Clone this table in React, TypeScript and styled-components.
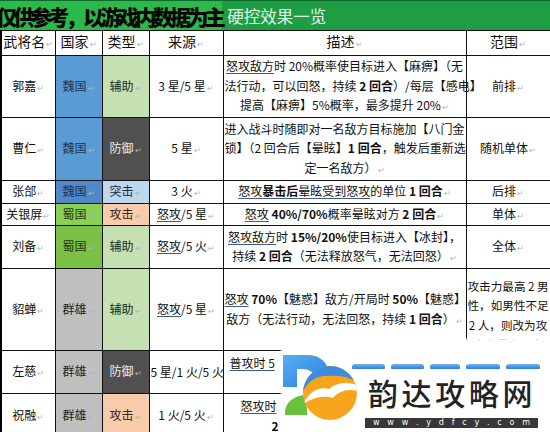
import React from 'react';
import styled, { createGlobalStyle } from 'styled-components';

const GlobalStyle = createGlobalStyle`
  html, body {
    margin: 0;
    padding: 0;
    background: #fff;
  }
  body {
    font-family: "Noto Sans CJK SC", "Noto Sans", sans-serif;
  }
`;

const Page = styled.div`
  position: relative;
  width: 550px;
  height: 432px;
  overflow: hidden;
  background: #fff;
  color: #111;
`;

const Banner = styled.div`
  display: flex;
  align-items: center;
  height: 30px;
  box-sizing: border-box;
  background: #1f9d44;
  border-top: 1px solid #0e6a2a;
  overflow: hidden;
`;

const Notice = styled.span`
  flex: 0 0 226px;
  align-self: stretch;
  display: flex;
  align-items: center;
  margin-left: -4px;
  background: #2cb94b;
  color: #050505;
  font-size: 21px;
  font-weight: 900;
  letter-spacing: -3.6px;
  white-space: nowrap;
`;

const Title = styled.span`
  margin-left: 5px;
  color: #e2f6e4;
  font-size: 16.5px;
  white-space: nowrap;
`;

const Sheet = styled.table`
  width: 549px;
  border-collapse: collapse;
  table-layout: fixed;
  border-left: 2px solid #000;
  font-size: 12px;
  line-height: 19.5px;
`;

const Th = styled.th`
  height: 24px;
  padding: 0;
  border: 1px solid #111;
  font-size: 14px;
  font-weight: 400;
  text-align: center;
  white-space: nowrap;
`;

const Row = styled.tr<{ $h: number }>`
  height: ${p => p.$h}px;
`;

const Td = styled.td<{ $bg?: string; $fg?: string; $small?: boolean }>`
  padding: 0 1px;
  border: 1px solid #111;
  background: ${p => p.$bg ?? 'transparent'};
  color: ${p => p.$fg ?? '#111'};
  font-size: ${p => (p.$small ? '11.6px' : 'inherit')};
  text-align: center;
  vertical-align: middle;
  white-space: nowrap;
  overflow: visible;
`;

const Lines = styled.div<{ $shift?: number }>`
  margin-top: ${p => p.$shift ?? 0}px;
  margin-bottom: ${p => -(p.$shift ?? 0)}px;
`;

const Line = styled.div<{ $indent?: number }>`
  min-height: 19.5px;
  text-align: ${p => (p.$indent === undefined ? 'center' : 'left')};
  padding-left: ${p => p.$indent ?? 0}px;
`;

const Mark = styled.span`
  margin-left: 1px;
  color: #b4b4b4;
  font-size: 8px;
`;

const U = styled.span`
  text-decoration: underline;
  text-decoration-color: #3d5b8c;
  text-underline-offset: 2px;
`;

const B = styled.b`
  font-weight: 700;
`;

/* watermark */

const Watermark = styled.div`
  position: absolute;
  left: 282px;
  top: 340px;
  right: 0;
  bottom: 0;
  display: flex;
  padding: 12px 0 0 1px;
  background: #fff;
  box-shadow: 0 0 2px 1px #fff;
`;

const Brand = styled.div`
  display: flex;
  flex-direction: column;
  margin-left: -11px;
`;

const Stripes = styled.div`
  display: flex;
  gap: 6px;
  margin-top: 12px;
  height: 5px;
`;

const Stripe = styled.span<{ $w: number }>`
  width: ${p => p.$w}px;
  border-radius: 3px 3px 1px 1px;
  background: linear-gradient(#6fb2ee, #2f7fd6);
  filter: blur(0.5px);
`;

const BrandName = styled.div`
  margin: 8px 0 0 16px;
  height: 30px;
  line-height: 30px;
  color: #232323;
  font-size: 30px;
  font-weight: 500;
  letter-spacing: 3.6px;
  white-space: nowrap;
`;

const UrlBar = styled.div`
  display: flex;
  justify-content: space-between;
  align-items: center;
  width: 173px;
  height: 10px;
  box-sizing: border-box;
  margin: 11px 0 0 13px;
  padding: 0 8px;
  background: #383838;
  color: #fff;
  font-family: "DejaVu Sans", sans-serif;
  font-size: 8px;
  line-height: 10px;
`;

const nationStyle: Record<string, { bg: string; fg: string }> = {
  魏国: { bg: '#5b9bd5', fg: '#1c3457' },
  蜀国: { bg: '#7cc046', fg: '#1f3a12' },
  群雄: { bg: '#bfbfbf', fg: '#222' },
};

const typeStyle: Record<string, { bg: string; fg: string }> = {
  辅助: { bg: '#c5e0b3', fg: '#1c2a14' },
  防御: { bg: '#505050', fg: '#ececec' },
  突击: { bg: '#bdd7ee', fg: '#1c2a3a' },
  攻击: { bg: '#f8cbad', fg: '#3a2414' },
};

interface DescLine {
  text: React.ReactNode;
  indent?: number;
}

interface Hero {
  name: string;
  nation: string;
  nationBg?: string;
  type: string;
  source: React.ReactNode;
  desc: DescLine[];
  range: React.ReactNode[];
  rangeShift?: number;
  h: number;
}

const heroes: Hero[] = [
  {
    name: '郭嘉', nation: '魏国', type: '辅助', h: 62,
    source: <>3 星/5 星<Mark>↵</Mark></>,
    desc: [
      { text: <><U>怒攻敌方</U>时 20%概率使目标进入【麻痹】（无</> },
      { text: <>法行动，可以回怒，持续 <B>2 回合</B>）/每层【感电】</> },
      { text: <>提高【麻痹】5%概率，最多提升 20%<Mark>↵</Mark></> },
    ],
    range: [<>前排<Mark>↵</Mark></>],
  },
  {
    name: '曹仁', nation: '魏国', type: '防御', h: 63,
    source: <>5 星<Mark>↵</Mark></>,
    desc: [
      { text: <>进入战斗时随即对一名敌方目标施加【八门金</> },
      { text: <>锁】（2 回合后【晕眩】<B>1 回合</B>，触发后重新选</> },
      { text: <>定一名敌方）<Mark>↵</Mark></> },
    ],
    range: [<>随机单体<Mark>↵</Mark></>],
  },
  {
    name: '张郃', nation: '魏国', nationBg: '#4f89c9', type: '突击', h: 20,
    source: <>3 火<Mark>↵</Mark></>,
    desc: [{ text: <><U>怒攻<B>暴击后</B>晕眩受到怒攻</U>的单位 <B>1 回合</B><Mark>↵</Mark></> }],
    range: [<>后排<Mark>↵</Mark></>],
  },
  {
    name: '关银屏', nation: '蜀国', nationBg: '#8ccf55', type: '攻击', h: 22,
    source: <><U>怒攻</U>/5 星<Mark>↵</Mark></>,
    desc: [{ text: <><U>怒攻</U> <B>40%/70%</B>概率晕眩对方 <B>2 回合</B><Mark>↵</Mark></> }],
    range: [<>单体<Mark>↵</Mark></>],
  },
  {
    name: '刘备', nation: '蜀国', type: '辅助', h: 43,
    source: <><U>怒攻</U>/5 火<Mark>↵</Mark></>,
    desc: [
      { text: <><U>怒攻敌方</U>时 <B>15%/20%</B>使目标进入【冰封】，</> },
      { text: <>持续 <B>2 回合</B>（无法释放怒气，无法回怒）<Mark>↵</Mark></> },
    ],
    range: [<>全体<Mark>↵</Mark></>],
  },
  {
    name: '貂蝉', nation: '群雄', type: '辅助', h: 82, rangeShift: 6,
    source: <><U>怒攻</U>/5 星<Mark>↵</Mark></>,
    desc: [
      { text: <><U>怒攻</U> <B>70%</B>【魅惑】敌方/开局时 <B>50%</B>【魅惑】</> },
      { text: <>敌方（无法行动，无法回怒，持续 <B>1 回合</B>）<Mark>↵</Mark></> },
    ],
    range: [<>攻击力最高 2 男</>, <>性，如男性不足</>, <>2 人，则改为攻</>, <>击力最高 2 人</>],
  },
  {
    name: '左慈', nation: '群雄', type: '防御', h: 43,
    source: <>5 星/1 火/5 火</>,
    desc: [
      { text: <U>普攻时 5</U>, indent: 5 },
      { text: null, indent: 5 },
    ],
    range: [],
  },
  {
    name: '祝融', nation: '群雄', type: '攻击', h: 44,
    source: <>1 火/5 火<Mark>↵</Mark></>,
    desc: [
      { text: <U>怒攻时</U>, indent: 16 },
      { text: <B>2</B>, indent: 47 },
    ],
    range: [],
  },
];

const Logo: React.FC = () => (
  <svg width="80" height="80" viewBox="0 0 80 80">
    <defs>
      <linearGradient id="dBlue" x1="0" y1="0" x2="1" y2="1">
        <stop offset="0" stopColor="#57b0f2" />
        <stop offset="1" stopColor="#2a7ddc" />
      </linearGradient>
      <clipPath id="ball">
        <circle cx="47" cy="41" r="27" />
      </clipPath>
    </defs>
    <path d="M0 3 H24 Q44 3 47 24 L33 27 Q30 17 20 17 H14 V35 H0 Z" fill="url(#dBlue)" />
    <path d="M2 63 Q1 47 20 43 Q25 54 24 63 Z" fill="#69c13c" />
    <g clipPath="url(#ball)">
      <rect x="18" y="12" width="60" height="60" fill="#f8a51e" />
      <path d="M16 50 Q24 22 47 24 Q66 22 78 34 V8 H16 Z" fill="#3b8de0" />
      <path d="M20 52 Q30 33 46 37 Q58 27 78 34 L78 40 Q60 34 50 46 Q36 42 20 52 Z" fill="#fff" />
    </g>
  </svg>
);

const App: React.FC = () => (
  <>
    <GlobalStyle />
    <Page>
      <Banner>
        <Notice>仅供参考，以游戏内数据为主</Notice>
        <Title>硬控效果一览</Title>
      </Banner>
      <Sheet>
        <colgroup>
          <col style={{ width: 54 }} />
          <col style={{ width: 47 }} />
          <col style={{ width: 47 }} />
          <col style={{ width: 74 }} />
          <col style={{ width: 243 }} />
          <col style={{ width: 84 }} />
        </colgroup>
        <thead>
          <tr>
            {['武将名', '国家', '类型', '来源', '描述', '范围'].map(h => (
              <Th key={h}>{h}<Mark>↵</Mark></Th>
            ))}
          </tr>
        </thead>
        <tbody>
          {heroes.map(hero => {
            const n = nationStyle[hero.nation];
            const t = typeStyle[hero.type];
            return (
              <Row key={hero.name} $h={hero.h}>
                <Td>{hero.name}<Mark>↵</Mark></Td>
                <Td $bg={hero.nationBg ?? n.bg} $fg={n.fg}>{hero.nation}<Mark>↵</Mark></Td>
                <Td $bg={t.bg} $fg={t.fg}>{hero.type}<Mark>↵</Mark></Td>
                <Td>{hero.source}</Td>
                <Td>
                  <Lines>
                    {hero.desc.map((line, i) => (
                      <Line key={i} $indent={line.indent}>{line.text}</Line>
                    ))}
                  </Lines>
                </Td>
                <Td $small={hero.range.length > 2}>
                  <Lines $shift={hero.rangeShift}>
                    {hero.range.map((line, i) => <Line key={i}>{line}</Line>)}
                  </Lines>
                </Td>
              </Row>
            );
          })}
        </tbody>
      </Sheet>
      <Watermark>
        <Logo />
        <Brand>
          <Stripes>
            {[33, 33, 30, 34, 34].map((w, i) => <Stripe key={i} $w={w} />)}
          </Stripes>
          <BrandName>韵达攻略网</BrandName>
          <UrlBar>
            {'www.ydfcy.com'.split('').map((c, i) => <span key={i}>{c}</span>)}
          </UrlBar>
        </Brand>
      </Watermark>
    </Page>
  </>
);

export default App;
